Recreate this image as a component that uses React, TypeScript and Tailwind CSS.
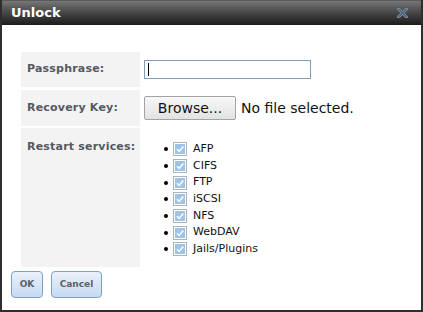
import React from 'react';

const SERVICES = ['AFP', 'CIFS', 'FTP', 'iSCSI', 'NFS', 'WebDAV', 'Jails/Plugins'];

function CheckBox() {
  return (
    <span className="flex h-[14px] w-[14px] items-center justify-center border border-[#a9b4c0] bg-white p-[1px]">
      <svg viewBox="0 0 10 10" className="h-full w-full">
        <rect width="10" height="10" fill="#9dc3e8" />
        <path d="M2 5.2 L4.2 7.4 L8.3 2.6" stroke="#fff" strokeWidth="1.6" fill="none" />
      </svg>
    </span>
  );
}

function Label({ children }: { children: React.ReactNode }) {
  return (
    <span className="text-[11px] font-bold text-[#545960] tracking-[0.2px]">{children}</span>
  );
}

export default function App() {
  return (
    <div
      className="w-[423px] h-[312px] bg-[#2e2e2e] px-[2px] pb-[2px] flex flex-col"
      style={{ fontFamily: '"DejaVu Sans", Verdana, sans-serif' }}
    >
      {/* Title bar */}
      <div className="h-[25px] shrink-0 flex items-center justify-between pl-[9px] pr-[13px] bg-gradient-to-b from-[#767676] via-[#464646] to-[#1c1c1c] border-t border-[#5a5a5a]">
        <span className="text-[13px] font-bold text-white">Unlock</span>
        <svg width="11" height="10" viewBox="0 0 11 10">
          <path d="M1.5 1 L9.5 9 M9.5 1 L1.5 9" stroke="#7a8da2" strokeWidth="3" strokeLinecap="square" />
          <path d="M1.5 1 L9.5 9 M9.5 1 L1.5 9" stroke="#4f6378" strokeWidth="1.4" />
        </svg>
      </div>

      {/* Body */}
      <div className="flex-1 bg-white pl-[19px] pt-[27px] flex flex-col">
        <div className="flex gap-[3px] h-[35px]">
          <div className="w-[119px] bg-[#f3f3f3] flex items-center pl-[6px]">
            <Label>Passphrase:</Label>
          </div>
          <div className="flex items-center pl-[1px]">
            <div className="w-[167px] h-[19px] border border-[#7f9db9] bg-white flex items-center pl-[3px]">
              <span className="w-[1px] h-[13px] bg-black" />
            </div>
          </div>
        </div>

        <div className="flex gap-[3px] h-[36px] mt-[3px]">
          <div className="w-[119px] bg-[#f3f3f3] flex items-center pl-[6px]">
            <Label>Recovery Key:</Label>
          </div>
          <div className="flex items-center pl-[1px] gap-[5px]">
            <div className="w-[92px] h-[24px] border border-[#a3a3a3] rounded-[2px] bg-gradient-to-b from-[#f8f8f8] to-[#e2e2e2] flex items-center justify-center text-[14px] text-[#111]">
              Browse...
            </div>
            <span className="text-[14px] text-[#111]">No file selected.</span>
          </div>
        </div>

        <div className="flex gap-[3px] h-[139px] mt-[2px]">
          <div className="w-[119px] bg-[#f3f3f3] pl-[6px] pt-[5px]">
            <Label>Restart services:</Label>
          </div>
          <ul className="pt-[13px] pl-[21px]">
            {SERVICES.map((s) => (
              <li key={s} className="flex items-center h-[16.66px]">
                <span className="w-[4px] h-[4px] rounded-full bg-black mr-[5px]" />
                <CheckBox />
                <span className="ml-[6px] text-[11px] text-[#111]">{s}</span>
              </li>
            ))}
          </ul>
        </div>

        <div className="flex gap-[8px] mt-[4px] -ml-[10px]">
          <button className="w-[32px] h-[27px] rounded-[4px] border border-[#7ea0c6] bg-gradient-to-b from-[#eaf1fa] to-[#c6daf2] text-[9px] font-bold text-[#5b5f66]">
            OK
          </button>
          <button className="w-[51px] h-[27px] rounded-[4px] border border-[#7ea0c6] bg-gradient-to-b from-[#eaf1fa] to-[#c6daf2] text-[9px] font-bold text-[#5b5f66]">
            Cancel
          </button>
        </div>
      </div>
    </div>
  );
}
